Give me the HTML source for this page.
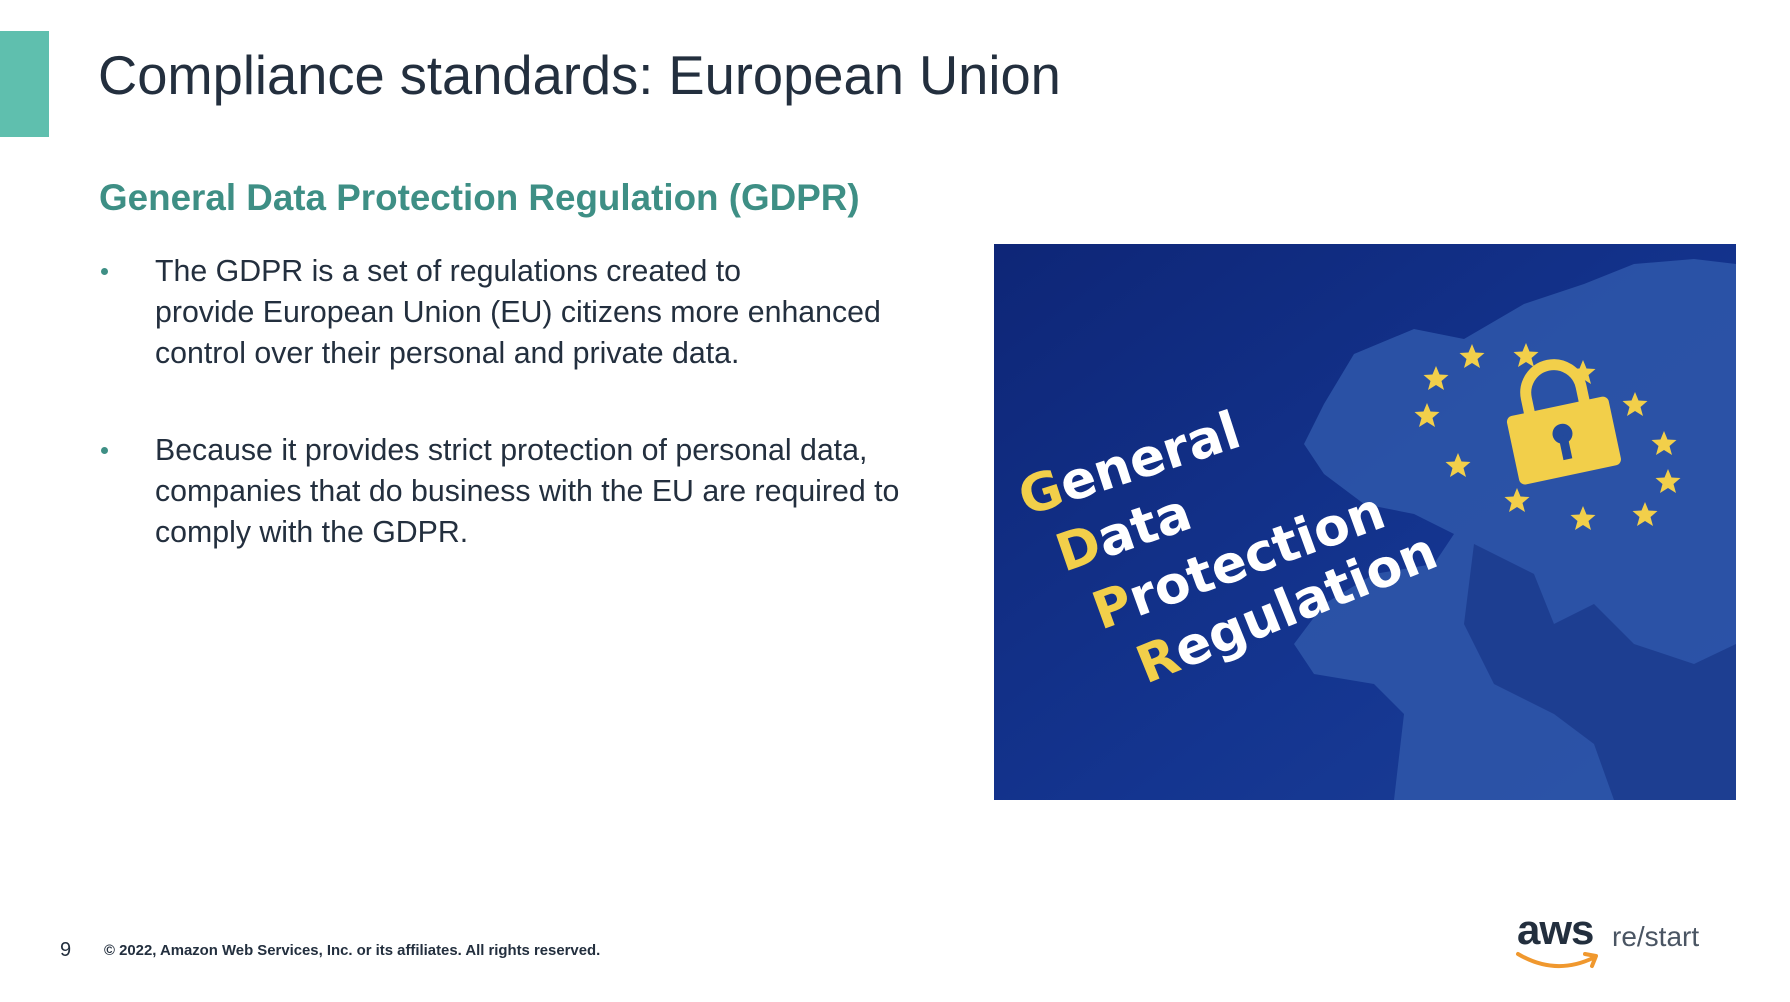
<!DOCTYPE html>
<html><head><meta charset="utf-8"><style>
html,body{margin:0;padding:0;background:#fff;}
body{width:1790px;height:1002px;position:relative;overflow:hidden;font-family:"Liberation Sans",sans-serif;color:#232f3e;}
.abs{position:absolute;white-space:nowrap;}
.bar{position:absolute;left:0;top:31px;width:49px;height:106px;background:#5fbfae;}
.title{left:98px;top:44px;font-size:54.3px;line-height:64px;color:#232f3e;}
.sub{left:99px;top:176px;font-size:36.8px;line-height:44px;font-weight:bold;color:#3e8f85;}
.p{left:155px;font-size:30.3px;line-height:41px;color:#232f3e;}
.dot{position:absolute;width:7px;height:7px;border-radius:50%;background:#3e8f85;}
</style></head><body>
<div class="bar"></div>
<div class="abs title">Compliance standards: European Union</div>
<div class="abs sub">General Data Protection Regulation (GDPR)</div>
<div class="dot" style="left:101px;top:268px"></div>
<div class="abs p" style="top:251px">The GDPR is a set of regulations created to<br>provide European Union (EU) citizens more enhanced<br>control over their personal and private data.</div>
<div class="dot" style="left:101px;top:447px"></div>
<div class="abs p" style="top:430px">Because it provides strict protection of personal data,<br>companies that do business with the EU are required to<br>comply with the GDPR.</div>

<svg class="abs" style="left:994px;top:244px" width="742" height="556" viewBox="0 0 742 556">
<defs>
<linearGradient id="bg" x1="0" y1="0" x2="1" y2="1"><stop offset="0" stop-color="#0e2677"/><stop offset="0.6" stop-color="#143590"/><stop offset="1" stop-color="#1c3f96"/></linearGradient>
<g id="st"><polygon points="0,-13 3.5,-4.5 12.5,-4 5.5,2 8,11 0,6 -8,11 -5.5,2 -12.5,-4 -3.5,-4.5" fill="#f2cf4a"/></g>
</defs>
<rect width="742" height="556" fill="url(#bg)"/>
<path d="M330,160 L360,110 L420,85 L470,95 L530,60 L590,40 L640,20 L700,15 L742,20 L742,556 L400,556 L410,470 L380,440 L320,430 L300,400 L330,360 L380,330 L440,320 L460,290 L420,270 L370,260 L330,230 L310,200 Z" fill="#2d55a8" opacity="0.9"/>
<path d="M480,300 L540,330 L560,380 L600,360 L640,400 L700,420 L742,400 L742,556 L620,556 L600,500 L560,470 L500,440 L470,380 Z" fill="#1a3a8c" opacity="0.8"/>
<g transform="translate(566,178) rotate(-12)">
<path d="M-28,-12 V-30 A28,28 0 0 1 28,-30 V-12" fill="none" stroke="#f2cf4a" stroke-width="11"/>
<rect x="-52" y="-16" width="104" height="70" rx="6" fill="#f2cf4a"/>
<circle cx="0" cy="12" r="10" fill="#234a9c"/><rect x="-4.5" y="14" width="9" height="24" fill="#234a9c"/>
</g>
<use href="#st" x="478" y="113"/><use href="#st" x="532" y="112"/><use href="#st" x="589" y="129"/><use href="#st" x="641" y="161"/><use href="#st" x="670" y="200"/><use href="#st" x="674" y="238"/><use href="#st" x="651" y="271"/><use href="#st" x="589" y="275"/><use href="#st" x="523" y="257"/><use href="#st" x="464" y="222"/><use href="#st" x="433" y="172"/><use href="#st" x="442" y="135"/>
<g font-family="DejaVu Sans, sans-serif" font-weight="bold" font-size="52" fill="#fff">
<text transform="translate(32,272) rotate(-18)"><tspan fill="#f2cf4a">G</tspan>eneral</text>
<text transform="translate(70,328) rotate(-19)"><tspan fill="#f2cf4a">D</tspan>ata</text>
<text transform="translate(107,386) rotate(-20)"><tspan fill="#f2cf4a">P</tspan>rotection</text>
<text transform="translate(152,440) rotate(-22)"><tspan fill="#f2cf4a">R</tspan>egulation</text>
</g>
</svg>

<div class="abs" style="left:60px;top:938px;font-size:20px;line-height:24px;color:#232f3e">9</div>
<div class="abs" style="left:104px;top:942px;font-size:14.9px;line-height:18px;font-weight:bold;color:#232f3e">© 2022, Amazon Web Services, Inc. or its affiliates. All rights reserved.</div>
<div class="abs" style="left:1517px;top:908px;font-size:42px;line-height:44px;font-weight:bold;color:#232f3e;letter-spacing:-1px">aws</div>
<svg class="abs" style="left:1515px;top:948px" width="90" height="26" viewBox="0 0 90 26"><path d="M3,6 Q40,28 78,10" fill="none" stroke="#f0982e" stroke-width="4" stroke-linecap="round"/><path d="M70,6 L81,8 L77,18" fill="none" stroke="#f0982e" stroke-width="4" stroke-linecap="round" stroke-linejoin="round"/></svg>
<div class="abs" style="left:1612px;top:920px;font-size:28px;line-height:34px;color:#4a5563">re/start</div>
</body></html>
